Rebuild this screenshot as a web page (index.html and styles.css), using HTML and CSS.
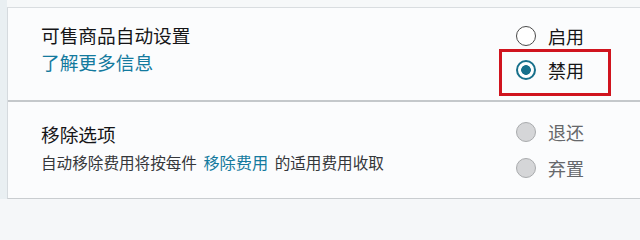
FILE: index.html
```html
<!DOCTYPE html>
<html lang="zh-CN">
<head>
<meta charset="utf-8">
<title>可售商品自动设置</title>
<link rel="stylesheet" href="styles.css">
</head>
<body>
<div class="page">
  <div class="panel">
    <section class="row row-first">
      <div class="info">
        <div class="title">可售商品自动设置</div>
        <a class="link" href="#">了解更多信息</a>
      </div>
      <div class="options">
        <label class="option">
          <span class="radio"></span>
          <span class="label">启用</span>
        </label>
        <label class="option highlighted">
          <span class="radio checked"></span>
          <span class="label">禁用</span>
          <span class="marker"></span>
        </label>
      </div>
    </section>
    <section class="row row-second">
      <div class="info">
        <div class="title">移除选项</div>
        <div class="desc">自动移除费用将按每件 <a class="link inline" href="#">移除费用</a> 的适用费用收取</div>
      </div>
      <div class="options options-disabled">
        <label class="option">
          <span class="radio disabled"></span>
          <span class="label">退还</span>
        </label>
        <label class="option">
          <span class="radio disabled"></span>
          <span class="label">弃置</span>
        </label>
      </div>
    </section>
  </div>
</div>
</body>
</html>
```

FILE: styles.css
```css
html, body {
  margin: 0;
  padding: 0;
}
body {
  width: 640px;
  height: 206px;
  overflow: hidden;
  background: #f5f7f9;
  font-family: "Noto Sans CJK SC", "Noto Sans", sans-serif;
}
.page {
  padding: 7px 0 0 0;
  background: linear-gradient(to right, #e9eff2 0, #e9eff2 7px, #f6f8f9 7px);
}
.panel {
  margin-left: 7px;
  background: #fbfcfd;
  border-top: 1px solid #d9dde0;
  border-left: 1px solid #d5dade;
  border-bottom: 1px solid #c9cdd0;
}
.row {
  display: grid;
  grid-template-columns: 1fr 124px;
  padding-left: 33px;
  box-sizing: border-box;
}
.row-first {
  height: 94px;
  border-bottom: 2px solid #c4c8cb;
}
.row-second {
  height: 96px;
}
.row-first .info {
  padding-top: 13px;
}
.row-second .info {
  padding-top: 18px;
}
.title {
  font-size: 18.7px;
  line-height: 27px;
  color: #151517;
}
.link {
  display: block;
  font-size: 18.7px;
  line-height: 27px;
  color: #137a9e;
  text-decoration: none;
}
.link.inline {
  display: inline;
  font-size: 16.2px;
  line-height: inherit;
}
.desc {
  margin-top: 4px;
  font-size: 15.6px;
  line-height: 22px;
  color: #35373a;
  word-spacing: 3px;
}
.options {
  display: flex;
  flex-direction: column;
  padding-top: 11px;
}
.row-second .options {
  padding-top: 12px;
}
.option {
  position: relative;
  display: flex;
  align-items: center;
  height: 34px;
  gap: 12px;
}
.options-disabled .option {
  height: 36px;
}
.radio {
  width: 20px;
  height: 20px;
  box-sizing: border-box;
  border-radius: 50%;
  border: 1.5px solid #4a4a4a;
  background: #ffffff;
  flex: none;
}
.radio.checked {
  border: 2.5px solid #17708b;
  background: radial-gradient(circle, #17708b 0, #17708b 4.5px, #ffffff 5.2px);
}
.radio.disabled {
  border: 1.5px solid #a9abad;
  background: #d5d6d8;
}
.label {
  font-size: 18px;
  line-height: 24px;
  color: #151517;
}
.options-disabled .label {
  color: #66686b;
}
.marker {
  position: absolute;
  left: -17px;
  top: -4px;
  width: 112px;
  height: 47px;
  box-sizing: border-box;
  border: 3px solid #d0141e;
}
```
